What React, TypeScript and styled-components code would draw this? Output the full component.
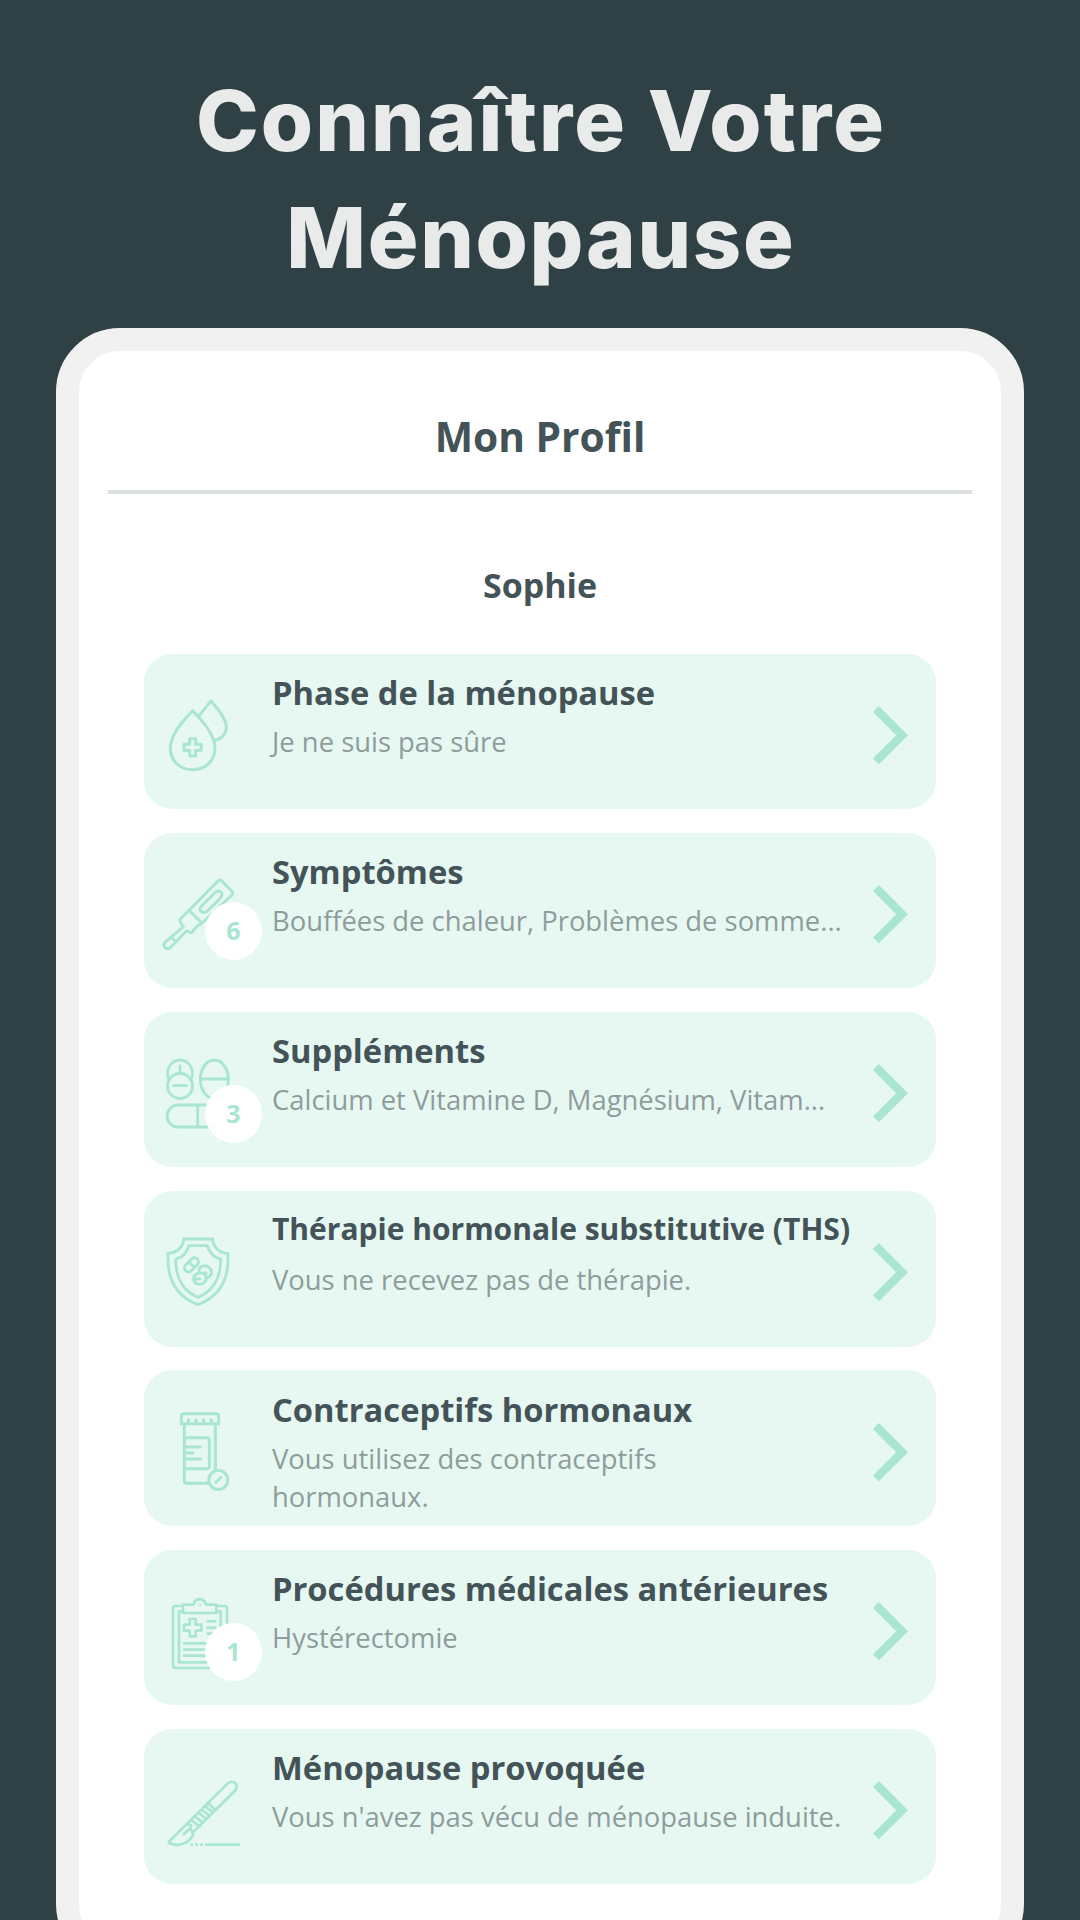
import React from "react";
import styled, { createGlobalStyle } from "styled-components";

const MINT = "#a8e6cf";

const GlobalStyle = createGlobalStyle`
  html, body { margin: 0; padding: 0; background: #304146; }
  * { box-sizing: border-box; }
`;

const Page = styled.main`
  width: 1080px;
  height: 1920px;
  overflow: hidden;
  background: #304146;
  font-family: "Open Sans", "Noto Sans", sans-serif;
  color: #435357;
  display: flex;
  flex-direction: column;
  align-items: center;
`;

const Heading = styled.h1`
  margin: 0;
  padding-top: 62px;
  height: 328px;
  flex: none;
  display: flex;
  flex-direction: column;
  align-items: center;
  font-family: Inter, "Open Sans", sans-serif;
  font-weight: 800;
  font-size: 84.5px;
  line-height: 117px;
  color: #e9ebea;
`;

const HeadingLine = styled.span<{ $spacing: number }>`
  white-space: nowrap;
  letter-spacing: ${(p) => p.$spacing}px;
  margin-right: ${(p) => -p.$spacing}px;
`;

const Phone = styled.section`
  width: 968px;
  height: 1640px;
  flex: none;
  border: 23px solid #f1f1f1;
  border-radius: 64px;
  background: #fff;
  display: flex;
  flex-direction: column;
  align-items: center;
`;

const ScreenTitle = styled.h2`
  margin: 0;
  width: 864px;
  height: 143px;
  padding-top: 55.5px;
  border-bottom: 4px solid #dce1e0;
  text-align: center;
  font-size: 40.7px;
  line-height: 58px;
  font-weight: 700;
`;

const UserName = styled.h3`
  margin: 0;
  height: 159.6px;
  padding-top: 66.5px;
  font-size: 34px;
  line-height: 48px;
  font-weight: 700;
`;

const CardList = styled.div`
  width: 792px;
  display: flex;
  flex-direction: column;
  gap: 23.8px;
`;

const Card = styled.article`
  position: relative;
  height: 155.4px;
  border-radius: 28px;
  background: #e7f8f3;
  display: flex;
`;

const IconColumn = styled.svg`
  width: 122px;
  height: 155px;
  flex: none;
  fill: none;
  stroke: ${MINT};
  stroke-width: 9;
  stroke-linejoin: round;
  stroke-linecap: round;
`;

const Badge = styled.span<{ $top: number }>`
  position: absolute;
  left: 61px;
  top: ${(p) => p.$top}px;
  width: 57px;
  height: 58px;
  border-radius: 50%;
  background: rgba(255, 255, 255, 0.97);
  color: ${MINT};
  font-weight: 700;
  font-size: 25px;
  line-height: 57px;
  text-align: center;
`;

const CardText = styled.div`
  flex: 1;
  padding-left: 6px;
  white-space: nowrap;
`;

const CardTitle = styled.div<{ $compact?: boolean }>`
  padding-top: ${(p) => (p.$compact ? 16.2 : 17.4)}px;
  height: 68px;
  font-weight: 700;
  font-size: ${(p) => (p.$compact ? 30 : 32.7)}px;
  line-height: 44px;
`;

const CardValue = styled.div`
  padding-top: 1.4px;
  font-size: 27.4px;
  line-height: 38px;
  color: #8e9c9b;
  white-space: pre-line;
`;

const Chevron = styled.svg`
  position: absolute;
  left: 723.5px;
  top: 46.2px;
  width: 46px;
  height: 70px;
  fill: none;
  stroke: ${MINT};
  stroke-width: 8.3;
`;

const Plus = ({ x, y }: { x: number; y: number }) => (
  <path d={`M${x - 9} ${y - 26}h18v17h17v18h-17v17h-18v-17h-17v-18h17z`} />
);

const Drops = () => (
  <>
    <path d="M158 182C145 197 91 245 91 295C91 333 121 359 158 359C196 359 225 332 225 295C225 246 172 199 158 182Z" />
    <path d="M178 197C190 180 203 166 213 153C226 168 259 203 259 230C259 252 245 267 226 270" />
    <Plus x={158} y={292} />
  </>
);

const Thermometer = () => (
  <g strokeWidth="8.5">
    <path d="M234 153Q240 147 246 153L274 182Q281 189 275 196L182 283Q178 287 172 287L154 309L140 302L93 351Q84 360 76 354Q68 346 75 337L130 290L121 276Q118 270 124 264Z" />
    <path d="M147 241L183 277M93 321L106 333M182 231L226 187Q236 178 244 187Q249 195 241 205L201 244Q191 251 183 244Q177 238 182 231Z" />
  </g>
);

const Pills = () => (
  <g strokeWidth="8.5">
    <path d="M85 205C77 180 92 150 120 150C148 150 163 180 155 205M120 168V188" />
    <circle cx="120" cy="228" r="37.5" />
    <path d="M101 227H139" />
    <ellipse cx="223" cy="208" rx="42" ry="58" />
    <path d="M181 207H265M116 285H229C275 285 275 351 229 351H116C70 351 70 285 116 285ZM173 285V351" />
  </g>
);

const Shield = () => (
  <g strokeWidth="8.5">
    <path d="M131 147H218C219 171 239 190 264 190V207C264 279 232 322 174 344C116 322 84 279 84 207V190C109 190 130 171 131 147Z" />
    <path d="M147 167H202C209 189 223 203 242 208C242 267 220 302 174 322C128 302 107 267 107 208C126 203 140 189 147 167Z" />
    <path d="M136 226L156 206Q165 200 172 207Q179 215 172 224L153 243Q144 249 137 242Q130 235 136 226ZM147 216L163 232M177 241C181 223 203 225 211 236C220 249 211 263 197 264M181 249C200 246 202 267 194 276C184 289 163 283 161 268C160 257 169 249 181 249ZM164 267H180M191 252L198 248" />
  </g>
);

const Bottle = () => (
  <>
    <path d="M124 162V140Q124 132 132 132H228Q236 132 236 140V162ZM145 150V158M168 150V158M191 150V158M214 150V158M133 163V333Q133 341 141 341H205M226 163V302M136 204H200Q208 204 208 212V289Q208 297 200 297H136M136 232H181M136 250H159M136 268H181" />
    <circle cx="235" cy="331" r="28.5" />
    <path d="M228 338L242 323" />
  </>
);

const Clipboard = () => (
  <g strokeWidth="8">
    <path d="M129 167H107Q99 167 99 175V345Q99 353 107 353H253Q261 353 261 345V175Q261 167 253 167H229" />
    <path d="M127 183H117V336H242V183H230M129 163H156Q162 163 163 157C168 143 190 143 195 157Q197 163 203 163H229V188H129Z" />
    <circle cx="179" cy="164" r="1" />
    <Plus x={158} y={232} />
    <path d="M203 213H226M203 232H226M203 250H226M132 279H226M132 298H226M132 316H226" />
  </g>
);

const Scalpel = () => (
  <g strokeWidth="8">
    <path d="M87 350L260 178C279 158 301 181 284 198L158 323C164 333 151 340 145 348C130 361 107 363 87 354Q85 352 87 350Z" />
    <path d="M132 327L151 309Q157 302 150 299L143 298M158 323L154 315M155 286L178 304M165 275L189 293M176 264L199 282M186 254L208 272M196 244L219 262M206 235L226 255" />
    <path d="M195 359H300M152 359H159M166 359H174M181 359H189" strokeLinecap="butt" strokeWidth="8.5" />
  </g>
);

interface Item {
  title: string;
  value: string;
  icon: React.FC;
  originY: number;
  compact?: boolean;
  badge?: { count: number; top: number };
}

const items: Item[] = [
  { title: "Phase de la ménopause", value: "Je ne suis pas sûre", icon: Drops, originY: 12 },
  { title: "Symptômes", value: "Bouffées de chaleur, Problèmes de somme...", icon: Thermometer, originY: 9, badge: { count: 6, top: 69.4 } },
  { title: "Suppléments", value: "Calcium et Vitamine D, Magnésium, Vitam...", icon: Pills, originY: 6, badge: { count: 3, top: 73.3 } },
  { title: "Thérapie hormonale substitutive (THS)", value: "Vous ne recevez pas de thérapie.", icon: Shield, originY: 3, compact: true },
  { title: "Contraceptifs hormonaux", value: "Vous utilisez des contraceptifs\nhormonaux.", icon: Bottle, originY: 1 },
  { title: "Procédures médicales antérieures", value: "Hystérectomie", icon: Clipboard, originY: -1, badge: { count: 1, top: 73.1 } },
  { title: "Ménopause provoquée", value: "Vous n'avez pas vécu de ménopause induite.", icon: Scalpel, originY: 12 },
];

export default function App() {
  return (
    <>
      <GlobalStyle />
      <Page>
        <Heading>
          <HeadingLine $spacing={2.1}>Connaître Votre</HeadingLine>
          <HeadingLine $spacing={1.7}>Ménopause</HeadingLine>
        </Heading>
        <Phone>
          <ScreenTitle>Mon Profil</ScreenTitle>
          <UserName>Sophie</UserName>
          <CardList>
            {items.map(({ title, value, icon: Icon, originY, compact, badge }) => (
              <Card key={title}>
                <IconColumn viewBox={`12 ${originY} 366 465`}>
                  <Icon />
                </IconColumn>
                {badge && <Badge $top={badge.top}>{badge.count}</Badge>}
                <CardText>
                  <CardTitle $compact={compact}>{title}</CardTitle>
                  <CardValue>{value}</CardValue>
                </CardText>
                <Chevron viewBox="0 0 46 70">
                  <path d="M7.9 9L34.1 35.2L7.9 61.4" />
                </Chevron>
              </Card>
            ))}
          </CardList>
        </Phone>
      </Page>
    </>
  );
}
